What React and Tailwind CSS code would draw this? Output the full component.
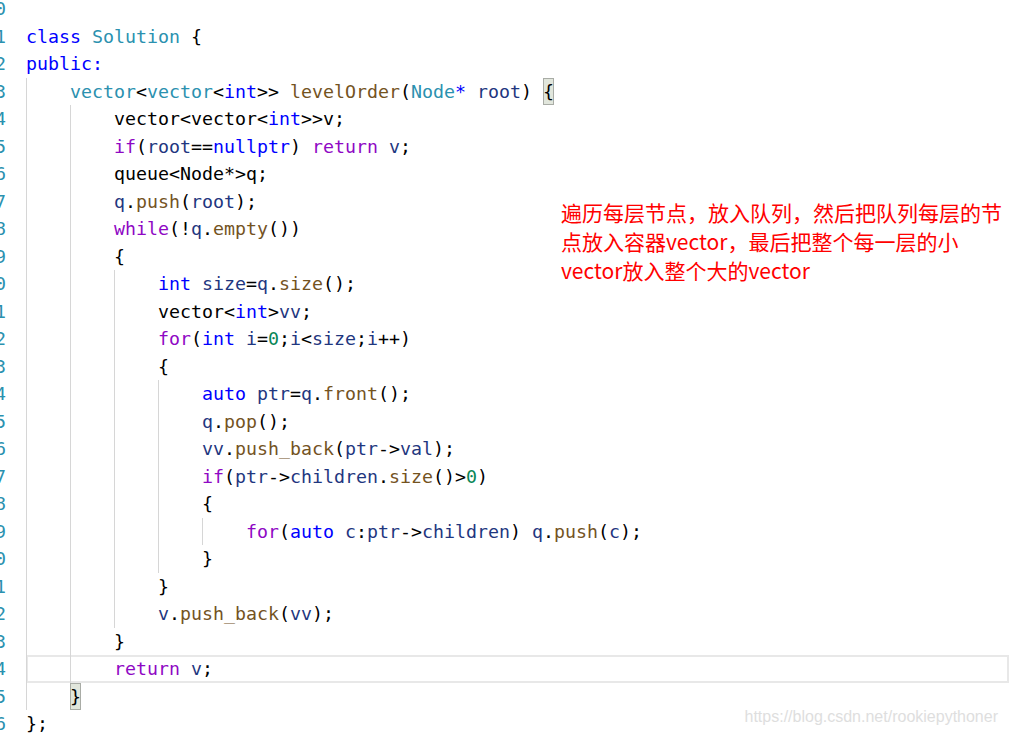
import React from "react";

// token colour classes
const C = {
  k: "text-[#0000ff]", // keywords
  c: "text-[#8f08c4]", // control flow
  t: "text-[#2b91af]", // types
  f: "text-[#74531f]", // functions
  v: "text-[#1f377f]", // locals / params
  n: "text-[#098658]", // numbers
  p: "text-black",
};

// each line: [indent, tokens]; a token is "text" (plain) or [text, kind]
const lines = [
  [0, []],
  [0, [["class", "k"], " ", ["Solution", "t"], " {"]],
  [0, [["public:", "k"]]],
  [1, [["vector", "t"], "<", ["vector", "t"], "<", ["int", "k"], ">> ", ["levelOrder", "f"], "(", ["Node", "t"], ["*", "k"], " ", ["root", "v"], ") ", ["{", "brace"]]],
  [2, ["vector<vector<", ["int", "k"], ">>v;"]],
  [2, [["if", "c"], "(", ["root", "v"], "==", ["nullptr", "k"], ") ", ["return", "c"], " ", ["v", "v"], ";"]],
  [2, ["queue<Node*>q;"]],
  [2, [["q", "v"], ".", ["push", "f"], "(", ["root", "v"], ");"]],
  [2, [["while", "c"], "(!", ["q", "v"], ".", ["empty", "f"], "())"]],
  [2, ["{"]],
  [3, [["int", "k"], " ", ["size", "v"], "=", ["q", "v"], ".", ["size", "f"], "();"]],
  [3, ["vector<", ["int", "k"], ">", ["vv", "v"], ";"]],
  [3, [["for", "c"], "(", ["int", "k"], " ", ["i", "v"], "=", ["0", "n"], ";", ["i", "v"], "<", ["size", "v"], ";", ["i", "v"], "++)"]],
  [3, ["{"]],
  [4, [["auto", "k"], " ", ["ptr", "v"], "=", ["q", "v"], ".", ["front", "f"], "();"]],
  [4, [["q", "v"], ".", ["pop", "f"], "();"]],
  [4, [["vv", "v"], ".", ["push_back", "f"], "(", ["ptr", "v"], "->", ["val", "v"], ");"]],
  [4, [["if", "c"], "(", ["ptr", "v"], "->", ["children", "v"], ".", ["size", "f"], "()>", ["0", "n"], ")"]],
  [4, ["{"]],
  [5, [["for", "c"], "(", ["auto", "k"], " ", ["c", "v"], ":", ["ptr", "v"], "->", ["children", "v"], ") ", ["q", "v"], ".", ["push", "f"], "(", ["c", "v"], ");"]],
  [4, ["}"]],
  [3, ["}"]],
  [3, [["v", "v"], ".", ["push_back", "f"], "(", ["vv", "v"], ");"]],
  [2, ["}"]],
  [2, [["return", "c"], " ", ["v", "v"], ";"]],
  [1, [["}", "brace"]]],
  [0, ["};"]],
];

function Token({ tok }) {
  if (typeof tok === "string") return <span className="text-black">{tok}</span>;
  const [text, kind] = tok;
  if (kind === "brace") {
    return (
      <span className="inline-block h-[27.5px] align-top bg-[#e1e6dc] text-black shadow-[inset_0_0_0_1px_#a9aca6]">
        {text}
      </span>
    );
  }
  return <span className={C[kind]}>{text}</span>;
}

function CodeLine({ num, indent, tokens, current }) {
  return (
    <div className="flex h-[27.5px] leading-[27.5px]">
      <div className="w-[6px] flex justify-end mr-[20px] text-[#2b91af] whitespace-pre">
        {num}
      </div>
      <div
        className={
          "flex flex-1 " +
          (current ? "shadow-[inset_0_0_0_2px_#e8e8e8]" : "")
        }
      >
        {Array.from({ length: indent }).map((_, i) => (
          <span key={i} className="w-[44px] shrink-0 border-l border-[#d6d6d6]" />
        ))}
        <span className="whitespace-pre">
          {tokens.map((t, i) => (
            <Token key={i} tok={t} />
          ))}
        </span>
      </div>
    </div>
  );
}

export default function App() {
  return (
    <div className="relative h-[735px] w-[1009px] overflow-hidden bg-white">
      <div className="mt-[-5px] font-['DejaVu_Sans_Mono',monospace] text-[18.27px]">
        {lines.map(([indent, tokens], i) => (
          <CodeLine
            key={i}
            num={String(10 + i)}
            indent={indent}
            tokens={tokens}
            current={i === 24}
          />
        ))}
      </div>

      {/* annotation drawn over the screenshot */}
      <div className="absolute left-[561px] top-[198px] font-['Noto_Sans_CJK_SC',sans-serif] text-[21px] leading-[29px] text-[#ff0000] whitespace-nowrap">
        <div>遍历每层节点，放入队列，然后把队列每层的节</div>
        <div>点放入容器vector，最后把整个每一层的小</div>
        <div>vector放入整个大的vector</div>
      </div>

      <div className="absolute right-[11px] top-[707px] font-['Liberation_Sans',sans-serif] text-[16px] leading-[20px] text-[#dedede]">
        https://blog.csdn.net/rookiepythoner
      </div>
    </div>
  );
}
